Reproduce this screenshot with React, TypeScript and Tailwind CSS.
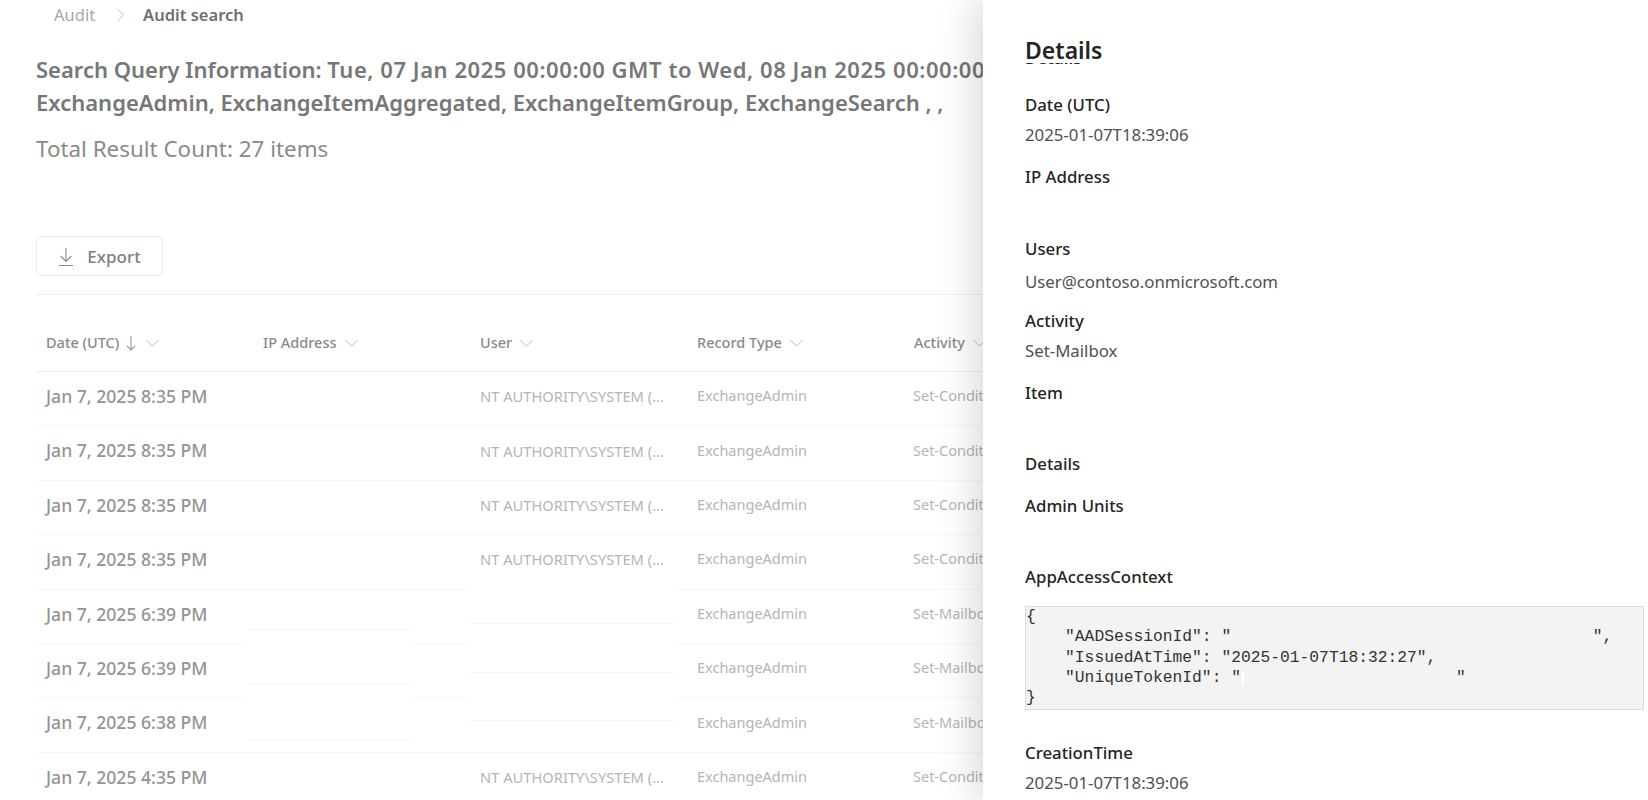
const rows = [
  { date: 'Jan 7, 2025 8:35 PM', user: 'NT AUTHORITY\\SYSTEM (...', activity: 'Set-ConditionalAccess' },
  { date: 'Jan 7, 2025 8:35 PM', user: 'NT AUTHORITY\\SYSTEM (...', activity: 'Set-ConditionalAccess' },
  { date: 'Jan 7, 2025 8:35 PM', user: 'NT AUTHORITY\\SYSTEM (...', activity: 'Set-ConditionalAccess' },
  { date: 'Jan 7, 2025 8:35 PM', user: 'NT AUTHORITY\\SYSTEM (...', activity: 'Set-ConditionalAccess' },
  { date: 'Jan 7, 2025 6:39 PM', user: '', activity: 'Set-Mailbox' },
  { date: 'Jan 7, 2025 6:39 PM', user: '', activity: 'Set-Mailbox' },
  { date: 'Jan 7, 2025 6:38 PM', user: '', activity: 'Set-Mailbox' },
  { date: 'Jan 7, 2025 4:35 PM', user: 'NT AUTHORITY\\SYSTEM (...', activity: 'Set-ConditionalAccess' },
];

const columns = ['IP Address', 'User', 'Record Type', 'Activity'];

const code = `{
    "AADSessionId": "                                     ",
    "IssuedAtTime": "2025-01-07T18:32:27",
    "UniqueTokenId": "                      "
}`;

const Chevron = ({ className }: { className: string }) => (
  <svg viewBox="0 0 16 9" fill="none" stroke="currentColor" strokeWidth="1" className={className}>
    <path d="M1 1l7 7 7-7" />
  </svg>
);

const SortArrow = () => (
  <svg viewBox="0 0 10 16" fill="none" stroke="currentColor" strokeWidth="1.1" className="ml-[7px] h-4 w-[10px] text-[#9a9a9a]">
    <path d="M5 1v14M1 11l4 4 4-4" />
  </svg>
);

const ExportIcon = () => (
  <svg viewBox="0 0 16 20" fill="none" stroke="currentColor" strokeWidth="1.1" className="h-5 w-4 text-[#8c8c8c]">
    <path d="M8 1v13M2.5 9l5.5 5.5L13.500 9M1 18.500h14" />
  </svg>
);

const Field = ({
  label,
  value,
  className,
  valueClassName = 'mt-[8px]',
}: {
  label: string;
  value?: string;
  className: string;
  valueClassName?: string;
}) => (
  <div className={className}>
    <div className="text-[16.800px] leading-[22px] font-medium text-[#242424]">{label}</div>
    {value && <div className={`${valueClassName} text-[16.800px] leading-[22px] text-[#505050]`}>{value}</div>}
  </div>
);

export default function App() {
  return (
    <div className="flex h-screen overflow-hidden bg-white font-['Noto_Sans',sans-serif]">
      <div className="min-w-0 flex-1 overflow-hidden pl-9">
        <div className="flex h-[30px] items-center pl-[18px] text-[16.500px]">
          <span className="text-[#a8a8a8]">Audit</span>
          <Chevron className="mr-[15px] ml-[18px] h-2 w-[15px] -rotate-90 text-[#b5b5b5]" />
          <span className="font-semibold text-[#707070]">Audit search</span>
        </div>

        <div className="mt-[23px] whitespace-nowrap text-[22px] leading-[33px] font-semibold text-[#777777]">
          <div>
            Search Query Information:{' '}
            <span className="tracking-[0.55px]">Tue, 07 Jan 2025 00:00:00 GMT to Wed, 08 Jan 2025 00:00:00 GMT</span>
          </div>
          <div>ExchangeAdmin, ExchangeItemAggregated, ExchangeItemGroup, ExchangeSearch , ,</div>
        </div>
        <div className="mt-[14px] text-[22.400px] leading-8 text-[#8a8a8a]">Total Result Count: 27 items</div>

        <button className="mt-[71px] flex h-10 w-[127px] items-center justify-center gap-[13px] rounded border border-[#ededed] pt-px text-[17px] font-medium text-[#808080]">
          <ExportIcon />
          Export
        </button>

        <div className="relative mt-[18px] border-t border-[#f0f0f0]">
          <div className="flex h-[77px] items-center border-b border-[#efefef] pt-[19px] text-[14.500px] font-medium text-[#8a8a8a]">
            <div className="flex w-[217px] shrink-0 items-center pl-[10px]">
              Date (UTC)
              <SortArrow />
              <Chevron className="ml-[9px] h-2 w-[15px] text-[#b0b0b0]" />
            </div>
            {columns.map((col) => (
              <div key={col} className="flex w-[217px] shrink-0 items-center pl-[10px]">
                {col}
                <Chevron className="ml-[7px] h-2 w-[15px] text-[#b0b0b0]" />
              </div>
            ))}
          </div>

          {rows.map((row, i) => (
            <div key={i} className="flex h-[54.4px] items-center border-b border-[#f8f8f8] pb-[5px] whitespace-nowrap">
              <div className="w-[217px] shrink-0 pl-[10px] text-[17.600px] font-medium text-[#949494]">{row.date}</div>
              <div className="w-[217px] shrink-0" />
              <div className="w-[217px] shrink-0 pl-[10px] text-[14.700px] text-[#b5b5b5]">{row.user}</div>
              <div className="w-[216px] shrink-0 pl-[10px] text-[14.500px] text-[#b5b5b5]">ExchangeAdmin</div>
              <div className="w-[217px] shrink-0 pl-[10px] text-[14.500px] text-[#b5b5b5]">{row.activity}</div>
            </div>
          ))}

          {/* redaction patches over the IP and user cells */}
          <div className="absolute top-[304px] left-[211px] h-[31px] w-[166px] border-b border-[#f7f7f7] bg-white" />
          <div className="absolute top-[336px] left-[211px] h-[54px] w-[166px] border-b border-[#f7f7f7] bg-white" />
          <div className="absolute top-[391px] left-[211px] h-[54px] w-[166px] border-b border-[#f7f7f7] bg-white" />
          <div className="absolute top-[294px] left-[434px] h-[35px] w-[205px] border-b border-[#f7f7f7] bg-white" />
          <div className="absolute top-[330px] left-[434px] h-[48px] w-[205px] border-b border-[#f7f7f7] bg-white" />
          <div className="absolute top-[379px] left-[434px] h-[47px] w-[205px] border-b border-[#f7f7f7] bg-white" />
        </div>
      </div>

      <div className="relative z-10 flex w-[665px] shrink-0 flex-col bg-white pl-[42px] shadow-[-12px_0_32px_rgba(0,0,0,0.13)]">
        <div className="h-[63px] shrink-0 pt-[32px] text-[23px] leading-[36px] font-semibold text-[#242424]">Details</div>
        <div className="min-h-0 flex-1 overflow-hidden">
          <div className="-mt-[16px] h-[22px] text-[16.800px] leading-[22px] font-semibold text-[#242424]">Details</div>
          <Field className="mt-[25px]" label="Date (UTC)" value="2025-01-07T18:39:06" />
          <Field className="mt-[20px] h-[50px]" label="IP Address" />
          <Field className="mt-[22px]" label="Users" value="User@contoso.onmicrosoft.com" valueClassName="mt-[11px]" />
          <Field className="mt-[17px]" label="Activity" value="Set-Mailbox" />
          <Field className="mt-[20px] h-[50px]" label="Item" />
          <Field className="mt-[21px]" label="Details" />
          <Field className="mt-[20px] h-[50px]" label="Admin Units" />
          <Field className="mt-[21px]" label="AppAccessContext" />
          <pre className="relative mt-[18px] mr-1 h-[104px] overflow-hidden border border-[#dcdcdc] bg-[#f3f3f3] font-['Liberation_Mono',monospace] text-[16.300px] leading-[20.300px] text-[#333333]">
            {code}
            <span className="absolute top-[64px] left-[216px] h-[15px] w-[2px] bg-white" />
          </pre>
          <Field className="mt-[32px]" label="CreationTime" value="2025-01-07T18:39:06" />
        </div>
      </div>
    </div>
  );
}
